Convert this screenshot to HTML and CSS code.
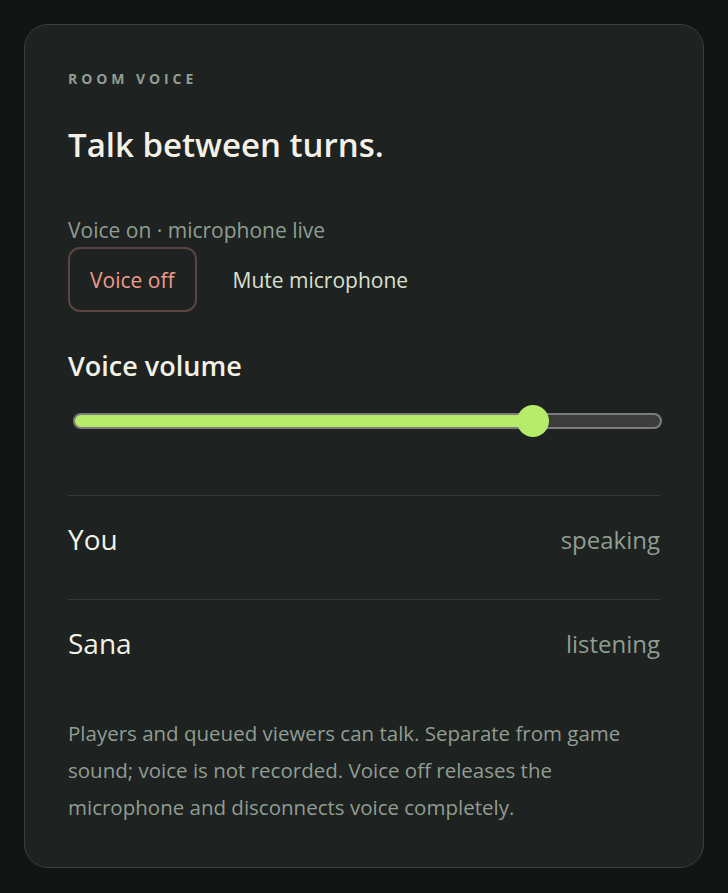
FILE: index.html
```html
<!DOCTYPE html>
<html lang="en">

<head>
    <meta charset="UTF-8">
    <meta name="viewport" content="width=device-width, initial-scale=1.0">
    <title>Room voice</title>
    <link rel="stylesheet" href="styles.css">
</head>

<body>
    <section class="card">
        <div class="eyebrow">ROOM VOICE</div>
        <h1 class="title">Talk between turns.</h1>

        <div class="status">Voice on · microphone live</div>
        <div class="actions">
            <button class="btn btn-off">Voice off</button>
            <button class="btn btn-plain">Mute microphone</button>
        </div>

        <label class="volume-label" for="volume">Voice volume</label>
        <input class="volume" id="volume" type="range" min="0" max="100" value="80" style="--fill: 80%">

        <ul class="people">
            <li class="person">
                <span class="name">You</span>
                <span class="state">speaking</span>
            </li>
            <li class="person">
                <span class="name">Sana</span>
                <span class="state">listening</span>
            </li>
        </ul>

        <p class="note">Players and queued viewers can talk. Separate from game sound; voice is not recorded. Voice off releases the microphone and disconnects voice completely.</p>
    </section>
</body>

</html>
```

FILE: styles.css
```css
:root {
    --bg: #111514;
    --card: #1e2220;
    --line: #363b37;
    --text: #f3f1e6;
    --muted: #909d92;
    --lime: #b6ec6a;
}

* {
    box-sizing: border-box;
}

body {
    margin: 0;
    padding: 24px;
    background-color: var(--bg);
    color: var(--text);
    font-family: "Segoe UI", "Open Sans", sans-serif;
}

.card {
    background-color: var(--card);
    border: 1px solid #3a3f3b;
    border-radius: 24px;
    padding: 42px 43px 41px;
}

.eyebrow {
    font-size: 14px;
    line-height: 24px;
    font-weight: 700;
    letter-spacing: 0.28em;
    color: var(--muted);
}

.title {
    margin: 32px 0 0;
    font-size: 33px;
    line-height: 43px;
    font-weight: 600;
}

.status {
    margin-top: 50px;
    font-size: 21px;
    line-height: 28px;
    color: var(--muted);
}

.actions {
    display: flex;
    gap: 14px;
    margin-top: 3px;
}

.btn {
    height: 65px;
    padding: 0 20px;
    border: 2px solid transparent;
    border-radius: 12px;
    background: none;
    font-family: inherit;
    font-size: 21px;
    cursor: pointer;
}

.btn-off {
    border-color: #5b4541;
    color: #f09a8a;
}

.btn-plain {
    color: #d9e0d0;
}

.volume-label {
    display: block;
    margin-top: 37px;
    font-size: 27px;
    line-height: 34px;
    font-weight: 600;
}

.volume {
    -webkit-appearance: none;
    appearance: none;
    display: block;
    width: calc(100% - 3px);
    height: 32px;
    margin: 22px 0 0 5px;
    background: none;
}

.volume::-webkit-slider-runnable-track {
    height: 16px;
    border: 2px solid #7c7c7c;
    border-radius: 8px;
    background: linear-gradient(to right, var(--lime) var(--fill), #3c3c3c var(--fill));
}

.volume::-webkit-slider-thumb {
    -webkit-appearance: none;
    width: 32px;
    height: 32px;
    margin-top: -10px;
    border-radius: 50%;
    background-color: var(--lime);
}

.people {
    list-style: none;
    margin: 58px 0 0;
    padding: 0;
}

.person {
    display: flex;
    justify-content: space-between;
    align-items: center;
    border-top: 1px solid var(--line);
    padding: 26px 0 43px;
}

.name {
    font-size: 28px;
    line-height: 34px;
}

.state {
    font-size: 24px;
    color: var(--muted);
}

.note {
    margin: 12px 0 0;
    font-size: 20.5px;
    line-height: 37px;
    color: var(--muted);
}
```
